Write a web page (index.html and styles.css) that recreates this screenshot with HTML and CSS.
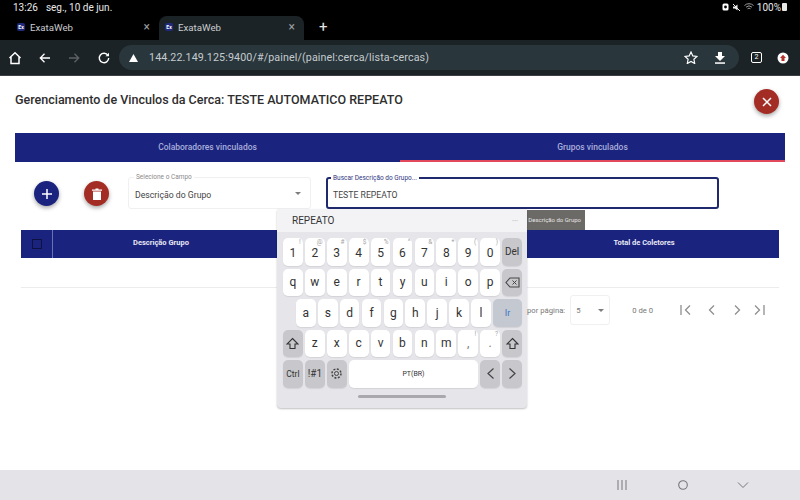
FILE: index.html
```html
<!DOCTYPE html>
<html>
  <head>
    <title>ExataWeb</title>
    <meta charset="utf-8">
    <link rel="stylesheet" href="styles.css">
  </head>
  <body>
    <!-- Android status bar -->
    <div class="status-bar">
      <span class="status-time">13:26</span>
      <span class="status-date">seg., 10 de jun.</span>
      <span class="status-right">
        <svg width="7" height="8" viewBox="0 0 7 8"><rect x="0.5" y="0.5" width="6" height="7" rx="1.5" fill="#fff"/><circle cx="3.5" cy="4" r="1.4" fill="#000"/></svg>
        <svg class="status-mute" width="9" height="9" viewBox="0 0 9 9"><path d="M1 3.5h2L5.5 1.5v6L3 5.5H1z" fill="#eee"/><path d="M1 1l7 7" stroke="#eee"/></svg>
        <svg class="status-wifi" width="10" height="8" viewBox="0 0 10 8"><path d="M0.5 2.5a6.5 6.5 0 0 1 9 0M2 4.2a4.4 4.4 0 0 1 6 0M3.5 5.8a2.2 2.2 0 0 1 3 0" stroke="#999" fill="none"/></svg>
        <span class="status-battery-text">100%</span>
        <span class="status-battery"></span>
      </span>
    </div>

    <!-- Browser tabs -->
    <div class="tab-strip">
      <div class="tab">
        <span class="favicon">Ex</span>
        <span class="tab-title">ExataWeb</span>
        <span class="tab-close">&#215;</span>
      </div>
      <div class="tab tab-active">
        <span class="favicon">Ex</span>
        <span class="tab-title">ExataWeb</span>
        <span class="tab-close">&#215;</span>
      </div>
      <span class="tab-new">+</span>
    </div>

    <!-- Browser toolbar -->
    <div class="toolbar">
      <svg class="tool-home" width="14" height="14" viewBox="0 0 14 14"><path d="M1.5 7L7 1.8 12.500 7M3 6v6.500h8V6" fill="none" stroke="#fff" stroke-width="1.500"/></svg>
      <svg class="tool-back" width="12" height="12" viewBox="0 0 12 12"><path d="M11 6H1.500M5.500 1.800L1.300 6l4.200 4.200" fill="none" stroke="#fff" stroke-width="1.300"/></svg>
      <svg class="tool-forward" width="12" height="12" viewBox="0 0 12 12"><path d="M1 6h9.500M6.500 1.800L10.700 6l-4.200 4.200" fill="none" stroke="#5c6265" stroke-width="1.300"/></svg>
      <svg class="tool-reload" width="12" height="12" viewBox="0 0 12 12"><path d="M10 3.500A4.700 4.700 0 1 0 10.700 6" fill="none" stroke="#fff" stroke-width="1.400"/><path d="M7.500 4.200h3.500V0.800z" fill="#fff"/></svg>
      <div class="omnibox">
        <svg width="9" height="8" viewBox="0 0 9 8"><path d="M4.500 0L9 8H0z" fill="#fff"/></svg>
        <span class="url">144.22.149.125:9400/#/painel/(painel:cerca/lista-cercas)</span>
        <svg class="omni-star" width="14" height="13" viewBox="0 0 14 13"><path d="M7 1l1.800 3.900 4.200.5-3.100 2.900.8 4.200L7 10.400l-3.700 2.100.8-4.200L1 5.400l4.200-.5z" fill="none" stroke="#fff" stroke-width="1.200"/></svg>
        <svg class="omni-download" width="12" height="12" viewBox="0 0 12 12"><path d="M4 0h4v4h3L6 9 1 4h3z" fill="#fff"/><rect x="1" y="10.300" width="10" height="1.500" fill="#fff"/></svg>
      </div>
      <span class="tab-count">2</span>
      <span class="profile"><svg width="12" height="12" viewBox="0 0 12 12"><circle cx="6" cy="6" r="5.500" fill="#fff"/><path d="M6 2.800L9 6H7.500v3h-3V6H3z" fill="#b3322b"/></svg></span>
    </div>

    <!-- Page content -->
    <div class="page">
      <div class="page-head">
        <h1 class="page-title">Gerenciamento de Vinculos da Cerca: TESTE AUTOMATICO REPEATO</h1>
        <button class="fab fab-red fab-close">
          <svg width="10" height="10" viewBox="0 0 10 10"><path d="M1 1l8 8M9 1l-8 8" stroke="#fff" stroke-width="1.500"/></svg>
        </button>
      </div>

      <div class="tabs">
        <div class="tabs-item">Colaboradores vinculados</div>
        <div class="tabs-item tabs-item-on">Grupos vinculados</div>
      </div>

      <div class="filters">
        <button class="fab fab-blue">
          <svg width="10" height="10" viewBox="0 0 10 10"><path d="M5 0v10M0 5h10" stroke="#fff" stroke-width="1.500"/></svg>
        </button>
        <button class="fab fab-red">
          <svg width="10" height="12" viewBox="0 0 10 12"><path d="M0 1.500h3.500V0.500h3v1H10v1.300H0zM1 3.500h8V12H1z" fill="#fff"/></svg>
        </button>
        <div class="field field-select">
          <span class="field-label">Selecione o Campo</span>
          <span class="field-value">Descrição do Grupo</span>
          <span class="select-arrow"></span>
        </div>
        <div class="field field-search">
          <span class="field-label">Buscar Descrição do Grupo...</span>
          <span class="field-value">TESTE REPEATO</span>
        </div>
      </div>

      <div class="table-head">
        <div class="cell-check"><span class="checkbox"></span></div>
        <div class="cell-name">Descrição Grupo</div>
        <div class="cell-total">Total de Coletores</div>
      </div>
      <div class="table-empty"></div>

      <div class="paginator">
        <span class="per-page">por página:</span>
        <div class="per-select"><span>5</span><span class="select-arrow"></span></div>
        <span class="range">0 de 0</span>
        <svg class="pager-icons" width="85" height="12" viewBox="0 0 85 12">
          <g fill="none" stroke="#8f8f8f" stroke-width="1.300">
            <path d="M1 1v10M10 1.500L5.500 6l4.500 4.500"/>
            <path d="M34 1.500L29.500 6l4.500 4.500"/>
            <path d="M55 1.500L59.500 6 55 10.500"/>
            <path d="M75 1.500L79.500 6 75 10.500M84 1v10"/>
          </g>
        </svg>
      </div>

      <div class="tooltip">Descrição do Grupo</div>
    </div>

    <!-- Floating Samsung keyboard -->
    <div class="keyboard">
      <div class="kb-suggest">
        <span>REPEATO</span>
        <span class="kb-dots">&#8226;&#8226;&#8226;</span>
      </div>
      <div class="kb-rows">
        <div class="kb-row kb-row-num">
          <span class="key">1<i>!</i></span><span class="key">2<i>@</i></span><span class="key">3<i>#</i></span><span class="key">4<i>$</i></span><span class="key">5<i>%</i></span><span class="key">6<i>^</i></span><span class="key">7<i>&amp;</i></span><span class="key">8<i>*</i></span><span class="key">9<i>(</i></span><span class="key">0<i>)</i></span><span class="key key-fn">Del</span>
        </div>
        <div class="kb-row">
          <span class="key">q</span><span class="key">w</span><span class="key">e</span><span class="key">r</span><span class="key">t</span><span class="key">y</span><span class="key">u</span><span class="key">i</span><span class="key">o</span><span class="key">p</span>
          <span class="key key-fn"><svg width="15" height="11" viewBox="0 0 15 11"><path d="M5 1h9v9H5L1 5.500z" fill="none" stroke="#444" stroke-width="1.100"/><path d="M7.500 3.500l4 4M11.500 3.500l-4 4" stroke="#444"/></svg></span>
        </div>
        <div class="kb-row kb-row-home">
          <span class="key">a</span><span class="key">s</span><span class="key">d</span><span class="key">f</span><span class="key">g</span><span class="key">h</span><span class="key">j</span><span class="key">k</span><span class="key">l</span>
          <span class="key key-fn key-go">Ir</span>
        </div>
        <div class="kb-row">
          <span class="key key-fn"><svg width="13" height="13" viewBox="0 0 13 13"><path d="M6.500 1.500L12 7H9v4.500H4V7H1z" fill="none" stroke="#333" stroke-width="1.100"/></svg></span>
          <span class="key">z</span><span class="key">x</span><span class="key">c</span><span class="key">v</span><span class="key">b</span><span class="key">n</span><span class="key">m</span><span class="key key-light">,<i>!</i></span><span class="key key-light">.<i>?</i></span>
          <span class="key key-fn"><svg width="13" height="13" viewBox="0 0 13 13"><path d="M6.500 1.500L12 7H9v4.500H4V7H1z" fill="none" stroke="#333" stroke-width="1.100"/></svg></span>
        </div>
        <div class="kb-row">
          <span class="key key-fn key-small">Ctrl</span>
          <span class="key key-fn">!#1</span>
          <span class="key key-fn"><svg width="13" height="13" viewBox="0 0 13 13"><circle cx="6.500" cy="6.500" r="2" fill="none" stroke="#444"/><circle cx="6.500" cy="6.500" r="4.500" fill="none" stroke="#444" stroke-width="1.500" stroke-dasharray="2 1.500"/></svg></span>
          <span class="key key-space">PT(BR)</span>
          <span class="key key-fn"><svg width="9" height="13" viewBox="0 0 9 13"><path d="M7.500 1.500L2 6.500l5.500 5" fill="none" stroke="#444" stroke-width="1.200"/></svg></span>
          <span class="key key-fn"><svg width="9" height="13" viewBox="0 0 9 13"><path d="M1.500 1.500L7 6.500l-5.500 5" fill="none" stroke="#444" stroke-width="1.200"/></svg></span>
        </div>
      </div>
      <div class="kb-handle"></div>
    </div>

    <!-- Android nav bar -->
    <div class="nav-bar">
      <svg width="10" height="10" viewBox="0 0 10 10"><path d="M1 0v10M5 0v10M9 0v10" stroke="#8a8a8e" stroke-width="1.200"/></svg>
      <svg width="10" height="10" viewBox="0 0 10 10"><circle cx="5" cy="5" r="4.300" fill="none" stroke="#77777b" stroke-width="1.100"/></svg>
      <svg class="nav-back" width="12" height="8" viewBox="0 0 12 8"><path d="M1 1.500L6 6.500l5-5" fill="none" stroke="#77777b" stroke-width="1"/></svg>
    </div>
  </body>
</html>
```

FILE: styles.css
```css
* {
  box-sizing: border-box;
}
body {
  margin: 0;
  width: 800px;
  height: 500px;
  overflow: hidden;
  position: relative;
  display: flex;
  flex-direction: column;
  background: #fff;
  font-family: Roboto, "Liberation Sans", sans-serif;
  color: #222;
}

/* status bar */
.status-bar {
  height: 14px;
  background: #000;
  color: #e8e8e8;
  font-size: 10px;
  display: flex;
  align-items: center;
  padding: 0 13px;
}
.status-date {
  margin-left: 8px;
}
.status-right {
  margin-left: auto;
  display: flex;
  align-items: center;
  gap: 3px;
}
.status-battery {
  width: 5px;
  height: 8px;
  background: #e8e8e8;
  border-radius: 1px;
}
.status-battery-text {
  font-size: 10px;
  margin-right: -2px;
}

/* tab strip */
.tab-strip {
  height: 26px;
  background: #000;
  display: flex;
  align-items: stretch;
  padding-left: 11px;
  padding-top: 2px;
}
.tab {
  width: 148px;
  display: flex;
  align-items: center;
  padding-left: 6px;
  padding-right: 9px;
  padding-bottom: 2px;
  color: #c9cdd0;
  font-size: 9.700px;
  border-radius: 8px 8px 0 0;
}
.tab-active {
  background: #1c2326;
  width: 145px;
}
.favicon {
  width: 8px;
  height: 8px;
  border-radius: 2px;
  background: #1f2a7c;
  color: #fff;
  font-size: 5px;
  font-weight: 700;
  line-height: 8px;
  text-align: center;
}
.tab-title {
  margin-left: 5px;
}
.tab-close {
  margin-left: auto;
  color: #9a9ea1;
  font-size: 12px;
}
.tab-new {
  color: #e4e4e4;
  font-size: 15px;
  line-height: 22px;
  margin-left: 15px;
}

/* toolbar */
.toolbar {
  height: 36px;
  background: #1c2326;
  border-bottom: 1px solid #3b3f42;
  display: flex;
  align-items: center;
  padding-left: 8px;
}
.tool-back {
  margin-left: 17px;
}
.tool-forward {
  margin-left: 17px;
}
.tool-reload {
  margin-left: 18px;
}
.omnibox {
  width: 620px;
  height: 25px;
  margin-left: 9px;
  padding-left: 10px;
  padding-right: 13px;
  border-radius: 13px;
  background: #29363c;
  display: flex;
  align-items: center;
  color: #c5cbce;
  font-size: 10.700px;
}
.url {
  margin-left: 11px;
  letter-spacing: 0.12px;
}
.omni-star {
  margin-left: auto;
}
.omni-download {
  margin-left: 16px;
}
.tab-count {
  width: 11px;
  height: 11px;
  margin-left: 12px;
  border: 1px solid #fff;
  border-radius: 2px;
  color: #fff;
  font-size: 7px;
  line-height: 9px;
  text-align: center;
}
.profile {
  margin-left: 15px;
  display: flex;
}

/* page */
.page {
  flex: 1;
  position: relative;
  background: #fff;
}
.page-head {
  height: 57px;
  padding: 15px 21px 0 15px;
  display: flex;
  justify-content: space-between;
  align-items: flex-start;
}
.page-title {
  margin: 0;
  font-size: 12.500px;
  font-weight: 500;
  line-height: 18px;
  color: #2e2e2e;
}
.fab {
  width: 25px;
  height: 25px;
  padding: 0;
  border: 0;
  border-radius: 50%;
  display: flex;
  align-items: center;
  justify-content: center;
  box-shadow: 0 2px 4px rgba(0, 0, 0, 0.35);
}
.fab-red {
  background: #a32c24;
}
.fab-blue {
  background: #1a237e;
}
.fab-close {
  margin-top: -2px;
}

.tabs {
  margin: 0 15px;
  height: 29px;
  display: flex;
  background: #1a237e;
}
.tabs-item {
  flex: 1;
  color: #a9aedb;
  font-size: 8.500px;
  font-weight: 500;
  line-height: 29px;
  text-align: center;
}
.tabs-item-on {
  border-bottom: 2px solid #e2475c;
}

.filters {
  height: 68px;
  padding-left: 34px;
  padding-bottom: 6px;
  display: flex;
  align-items: center;
  gap: 25px;
}
.filters .fab {
  margin-top: 1px;
}
.field {
  height: 32px;
  position: relative;
  display: flex;
  align-items: center;
  border-radius: 3px;
  font-size: 8.700px;
}
.field-select {
  width: 183px;
  margin-left: -6px;
  padding-left: 6px;
  border: 1px solid #f0f0f0;
}
.field-search {
  width: 393px;
  margin-left: -10px;
  padding-left: 5px;
  border: 2px solid #1f2a6e;
}
.field-label {
  position: absolute;
  left: 5px;
  top: -5px;
  padding: 0 2px;
  background: #fff;
  color: #8a8a8a;
  font-size: 6.500px;
  line-height: 8px;
}
.field-search .field-label {
  color: #2f3680;
  left: 3px;
}
.field-value {
  color: #444;
  padding-top: 3px;
}
.select-arrow {
  width: 0;
  height: 0;
  border-left: 3px solid transparent;
  border-right: 3px solid transparent;
  border-top: 3px solid #7d7d7d;
}
.field-select .select-arrow {
  margin-left: auto;
  margin-right: 9px;
}

.table-head {
  margin: 0 21px;
  height: 28px;
  background: #1a237e;
  color: #e6e7f3;
  font-size: 7.500px;
  font-weight: 700;
  display: flex;
  align-items: center;
  text-align: center;
}
.cell-check {
  width: 32px;
  height: 100%;
  border-right: 1px solid #6a72b5;
  display: flex;
  align-items: center;
  justify-content: center;
}
.checkbox {
  width: 10px;
  height: 10px;
  border: 1px solid #0d1240;
}
.cell-name {
  width: 216px;
  padding-bottom: 3px;
}
.cell-total {
  margin-left: 257px;
  width: 236px;
  padding-bottom: 3px;
}
.table-empty {
  margin: 0 21px;
  height: 30px;
  border-bottom: 1px solid #ececec;
}

.paginator {
  height: 44px;
  padding-left: 527px;
  display: flex;
  align-items: center;
  color: #777;
  font-size: 7.700px;
}
.per-select {
  width: 40px;
  height: 30px;
  margin-left: 5px;
  padding-left: 5px;
  padding-right: 5px;
  border: 1px solid #f0f0f0;
  border-radius: 3px;
  display: flex;
  align-items: center;
  justify-content: space-between;
}
.range {
  margin-left: 22px;
}
.pager-icons {
  margin-left: 27px;
}
.tooltip {
  position: absolute;
  left: 520px;
  top: 134px;
  width: 65px;
  height: 20px;
  background: #6c6a66;
  color: #e4e4e4;
  font-size: 6px;
  line-height: 20px;
  text-align: right;
  padding-right: 4px;
}

/* keyboard */
.keyboard {
  position: absolute;
  left: 277px;
  top: 209px;
  width: 250px;
  height: 199px;
  background: #e5e5ea;
  border-radius: 2px 2px 4px 4px;
  box-shadow: 0 1px 2px rgba(0, 0, 0, 0.25);
  display: flex;
  flex-direction: column;
}
.kb-suggest {
  height: 23px;
  background: #f3f3f6;
  padding: 0 9px 0 15px;
  display: flex;
  align-items: center;
  justify-content: space-between;
  font-size: 10px;
  color: #333;
}
.kb-dots {
  color: #c6c6ca;
  font-size: 6px;
}
.kb-rows {
  padding: 6px 5px 0 6px;
  display: flex;
  flex-direction: column;
  gap: 3px;
}
.kb-row {
  height: 27.500px;
  display: flex;
  gap: 2.200px;
}
.kb-row-home {
  padding-left: 13px;
}
.kb-row-num .key {
  padding-top: 3px;
}
.key {
  flex: 1;
  min-width: 0;
  position: relative;
  background: #fff;
  border-radius: 5px;
  display: flex;
  align-items: center;
  justify-content: center;
  font-size: 12px;
  color: #333;
  box-shadow: 0 1px 1px rgba(0, 0, 0, 0.08);
}
.key i {
  position: absolute;
  top: 0;
  right: 2px;
  color: #a4a4a4;
  font-size: 6.500px;
  line-height: 8px;
  font-style: normal;
}
.key-fn {
  background: #c8c8cc;
  font-size: 10px;
}
.kb-row-num .key-fn {
  padding-top: 0;
}
.key-small {
  font-size: 8.500px;
}
.key-go {
  flex: 0 0 29px;
  margin-left: auto;
  background: #c4c8d0;
  color: #3b74c9;
  font-size: 9px;
}
.key-light {
  color: #777;
}
.key-space {
  flex: 0 0 129px;
  font-size: 7px;
}
.kb-handle {
  width: 88px;
  height: 3px;
  margin: auto auto 10px;
  background: #a9a9ad;
  border-radius: 2px;
}

/* nav bar */
.nav-bar {
  height: 30px;
  background: #e4e4e8;
  position: relative;
  display: flex;
  align-items: center;
  padding-left: 617px;
  gap: 51px;
}
.nav-back {
  margin-left: -2px;
}
```
